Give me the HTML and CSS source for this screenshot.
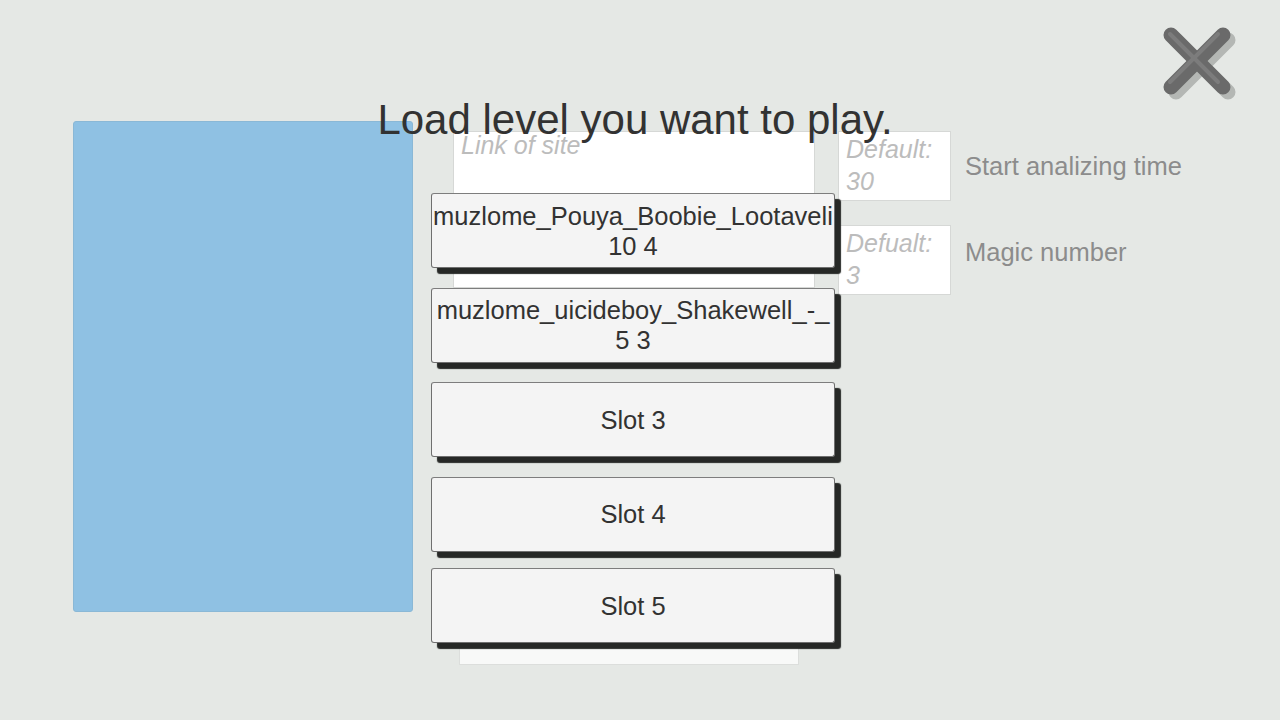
FILE: index.html
```html
<!DOCTYPE html>
<html lang="en">
<head>
<meta charset="utf-8">
<title>Load level</title>
<link rel="stylesheet" href="styles.css">
</head>
<body>
<div class="screen">
  <h1 class="title">Load level you want to play.</h1>
  <button class="close" aria-label="Close">
    <svg width="90" height="90" viewBox="0 0 90 90">
      <g stroke-linecap="round" stroke-width="15" fill="none">
        <g stroke="#b4b7b4" transform="translate(5 5)">
          <line x1="19" y1="20" x2="71" y2="72"/>
          <line x1="71" y1="20" x2="19" y2="72"/>
        </g>
        <g stroke="#6a6a6a">
          <line x1="19" y1="20" x2="71" y2="72"/>
          <line x1="71" y1="20" x2="19" y2="72"/>
        </g>
        <g stroke="#7c7c7c" stroke-width="4" transform="translate(-3 -3)">
          <line x1="21" y1="22" x2="69" y2="70"/>
          <line x1="69" y1="22" x2="21" y2="70"/>
        </g>
      </g>
    </svg>
  </button>
  <div class="content">
    <div class="preview"></div>
    <div class="loader">
      <div class="field link-field"><span class="placeholder">Link of site</span></div>
      <div class="list-bottom"></div>
      <div class="slots">
        <button class="slot">muzlome_Pouya_Boobie_Lootaveli<br>10 4</button>
        <button class="slot">muzlome_uicideboy_Shakewell_-_<br>5 3</button>
        <button class="slot">Slot 3</button>
        <button class="slot">Slot 4</button>
        <button class="slot slot-last">Slot 5</button>
      </div>
    </div>
    <div class="settings">
      <div class="setting">
        <div class="field small-field"><span class="placeholder">Default:<br>30</span></div>
        <span class="label label-time">Start analizing time</span>
      </div>
      <div class="setting">
        <div class="field small-field"><span class="placeholder">Defualt:<br>3</span></div>
        <span class="label label-magic">Magic number</span>
      </div>
    </div>
  </div>
</div>
</body>
</html>
```

FILE: styles.css
```css
* { box-sizing: border-box; }
html, body {
  margin: 0;
  padding: 0;
  background: #e5e8e5;
  font-family: "Liberation Sans", Arial, sans-serif;
}
.screen {
  position: relative;
  width: 1280px;
  height: 720px;
  overflow: hidden;
}
.title {
  position: absolute;
  z-index: 5;
  left: 0;
  right: 0;
  top: 96px;
  margin: 0;
  text-align: center;
  font-weight: normal;
  font-size: 42px;
  line-height: 48px;
  color: #323232;
  padding-right: 10px;
  pointer-events: none;
}
.close {
  position: absolute;
  z-index: 5;
  top: 15px;
  left: 1152px;
  width: 90px;
  height: 90px;
  padding: 0;
  border: 0;
  background: none;
}
.close svg { display: block; }
.content {
  display: flex;
  align-items: flex-start;
  padding: 121px 0 0 73px;
}
.preview {
  width: 340px;
  height: 491px;
  background: #8fc1e3;
  border: 1px solid #8ab8d6;
  border-radius: 3px;
  flex: none;
}
.loader {
  position: relative;
  z-index: 2;
  width: 404px;
  margin: 10px 0 0 18px;
  flex: none;
}
.field {
  background: #ffffff;
  border: 1px solid #d6d8d6;
}
.placeholder {
  font-style: italic;
  color: #bcbcbc;
  font-size: 25px;
}
.link-field {
  position: absolute;
  left: 22px;
  top: 0;
  width: 362px;
  height: 157px;
  padding: 0 7px;
  line-height: 26px;
}
.list-bottom {
  position: absolute;
  left: 28px;
  top: 508px;
  width: 340px;
  height: 26px;
  background: #f8f9f8;
  border: 1px solid #dcdedc;
}
.slots {
  position: relative;
  display: flex;
  flex-direction: column;
  gap: 19.5px;
  padding-top: 62px;
}
.slot {
  display: flex;
  align-items: center;
  justify-content: center;
  height: 75px;
  width: 404px;
  padding: 0;
  background: #f4f4f4;
  border: 1px solid #6f6f6f;
  border-top-color: #7d7d7d;
  border-radius: 3px;
  box-shadow: 6px 6px 1px #262826;
  font-family: "Liberation Sans", Arial, sans-serif;
  font-size: 25.5px;
  line-height: 30px;
  color: #323232;
  text-align: center;
  white-space: nowrap;
}
.slot-last { margin-top: -3px; }
.settings {
  display: flex;
  flex-direction: column;
  gap: 24px;
  margin: 10px 0 0 3px;
  position: relative;
  z-index: 1;
}
.setting {
  display: flex;
  align-items: flex-start;
  gap: 14px;
}
.small-field {
  width: 113px;
  height: 70px;
  padding: 3px 7px 0;
  line-height: 29px;
}
.label {
  font-size: 25.5px;
  line-height: 30px;
  color: #8c8c8c;
}
.label-time { margin-top: 20px; }
.label-magic { margin-top: 12px; }
```
